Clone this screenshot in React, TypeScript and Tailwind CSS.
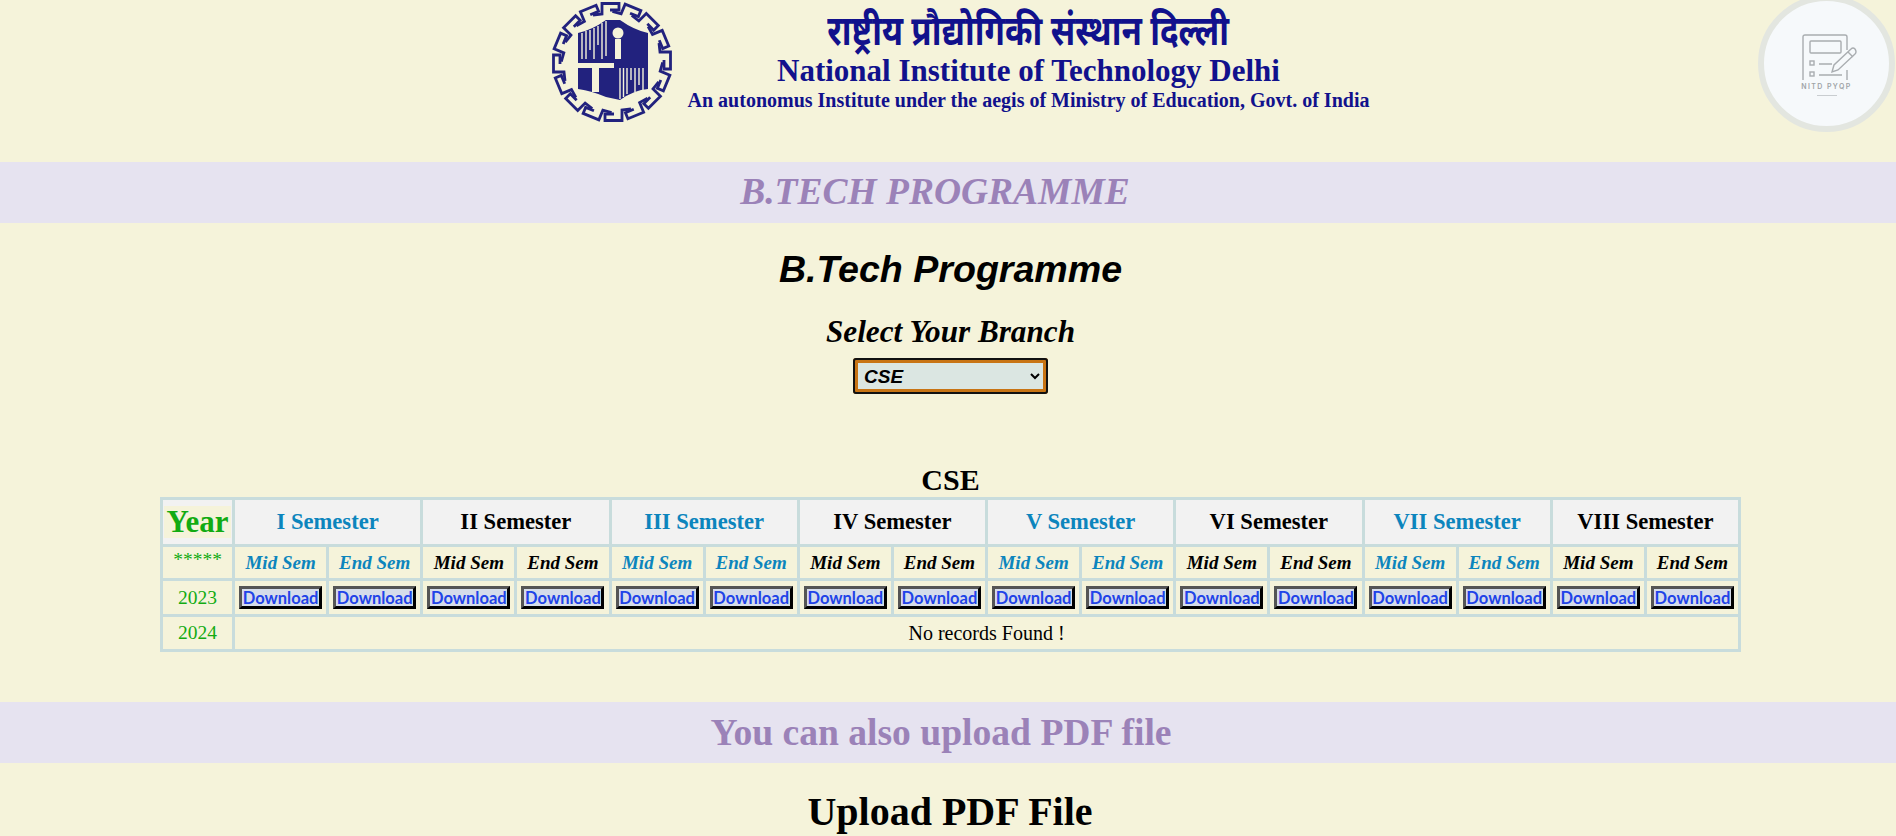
import React from 'react';

const semesters = ['I', 'II', 'III', 'IV', 'V', 'VI', 'VII', 'VIII'];

// Greek key ring + building mark of the institute
const InstituteLogo = () => {
  const keys = Array.from({ length: 16 }, (_, i) => i * 22.5);
  return (
    <svg width="128" height="124" viewBox="0 0 124 124" className="shrink-0 -ml-[2px]">
      {keys.map((deg) => (
        <path
          key={deg}
          transform={`rotate(${deg} 62 62)`}
          d="M43 15 L52 14 L52 3.5 L69 3.5 L69 10 L60 10"
          fill="none"
          stroke="#22227e"
          strokeWidth="2.8"
        />
      ))}
      <path d="M28 33 Q42 30 56 20 L70 20 Q84 30 98 33 L98 89 Q84 90 70 100 L56 97 Q42 91 28 89 Z" fill="#22227e" />
      <g stroke="#f5f3da" strokeWidth="1.4">
        <path d="M32 33 V59 M36 31 V59 M40 30 V50 M44 28 V59 M48 26 V45 M52 23 V59 M56 21 V56" />
        <path d="M70 68 V99 M73.5 68 V97 M77 68 V94 M81 68 V80 M85 68 V92 M89 68 V85 M93 68 V90" />
      </g>
      <circle cx="68" cy="33" r="5.5" fill="#f5f3da" />
      <rect x="65" y="39" width="6" height="20" fill="#f5f3da" />
      <rect x="28" y="63" width="36" height="5" fill="#f5f3da" />
      <rect x="42" y="68" width="7" height="24" fill="#f5f3da" />
    </svg>
  );
};

const PyqpBadge = () => (
  <div className="absolute right-px top-[-5px] flex h-[137px] w-[137px] flex-col items-center justify-center rounded-full border-[6px] border-[#e3e6e0] bg-[#f6f9fb]">
    <svg width="56" height="48" viewBox="0 0 56 46" fill="none" stroke="#a9adb0" strokeWidth="1.4" className="mt-[1px] ml-[4px]">
      <path d="M2 46 V3 Q2 1 4 1 H44 Q46 1 46 3 V16 M46 36 V46" />
      <rect x="9" y="7" width="31" height="12" rx="1" />
      <rect x="9" y="27" width="4" height="4" />
      <rect x="9" y="38" width="4" height="4" />
      <path d="M18 30 H31 M18 41 H41 M31 38 L33 31 L50 15 Q52 13 54 15 Q56 18 54 20 L37 36 Z M47 18 L52 23" />
    </svg>
    <span className="mt-[1px] font-['Inter',sans-serif] text-[7px] font-semibold leading-[9px] tracking-[1.4px] text-[#a0a4a7]">NITD PYQP</span>
    <span className="mt-[4px] h-px w-[20px] bg-[#c9cdd0]" />
  </div>
);

const DownloadButton = () => (
  <button className="mt-[2px] h-[23px] w-[83px] border-[3px] border-t-[#555] border-l-[#555] border-r-black border-b-black bg-[#d5dcea] font-['Lato','Open_Sans',sans-serif] text-[16.5px] leading-[16px] font-bold whitespace-nowrap text-[#2143e8]">
    Download
  </button>
);

export default function App() {
  return (
    <div className="relative h-[836px] overflow-hidden bg-[#f5f3da] font-['Liberation_Serif','Noto_Sans_Devanagari','Noto_Sans',serif]">
      <header className="flex h-[162px] items-start pl-[550px]">
        <InstituteLogo />
        <div className="ml-[12px] flex w-[681px] flex-col items-center font-bold text-[#11118c]">
          <div className="mt-[8px] scale-x-[0.81] text-[41px] leading-[46px] whitespace-nowrap">राष्ट्रीय प्रौद्योगिकी संस्थान दिल्ली</div>
          <div className="text-[31px] leading-[33px]">National Institute of Technology Delhi</div>
          <div className="mt-[2px] text-[20px] leading-[22px] whitespace-nowrap">An autonomus Institute under the aegis of Ministry of Education, Govt. of India</div>
        </div>
      </header>
      <PyqpBadge />

      <div className="flex h-[61px] items-center justify-center bg-[#e6e3f0] pr-[26px] text-[37.5px] font-bold italic text-[#9b82b8]">
        B.TECH PROGRAMME
      </div>

      <main className="flex flex-col items-center pl-[5px]">
        <h1 className="mt-[24px] font-['Liberation_Sans',sans-serif] text-[37.6px] leading-[44px] font-bold italic text-black">B.Tech Programme</h1>
        <h2 className="mt-[24px] text-[31.2px] leading-[34px] font-bold italic text-black">Select Your Branch</h2>
        <select className="mt-[9px] h-[36px] w-[195px] rounded-[3px] border-[5px] border-[#c87414] bg-[#dbe6e2] pl-[2px] font-['Liberation_Sans',sans-serif] text-[19px] font-bold italic text-black outline-2 -outline-offset-2 outline-[#111]" defaultValue="CSE">
          <option>CSE</option>
        </select>

        <h3 className="mt-[69px] text-[30px] leading-[34px] font-bold text-black">CSE</h3>
        <table className="w-[1581px] table-fixed border-collapse border-[3px] border-[#c8dcdc] text-center">
          <colgroup>
            <col className="w-[72px]" />
          </colgroup>
          <tbody>
            <tr className="h-[47px]">
              <th className="border-[3px] border-[#c8dcdc] bg-[#f2f2f2] px-[1px]">
                <span className="block bg-[#f5f3da] text-[31px] leading-[32px] font-bold text-[#12ab12]">Year</span>
              </th>
              {semesters.map((s, i) => (
                <th
                  key={s}
                  colSpan={2}
                  className={`border-[3px] border-[#c8dcdc] bg-[#f2f2f2] text-[22.6px] leading-[26px] font-bold ${i % 2 === 0 ? 'text-[#0c85bd]' : 'text-black'}`}
                >
                  {s} Semester
                </th>
              ))}
            </tr>
            <tr className="h-[34px]">
              <td className="border-[3px] border-[#c8dcdc] pb-[6px] text-[19.5px] leading-[20px] text-[#12ab12]">*****</td>
              {semesters.map((s, i) => (
                <React.Fragment key={s}>
                  <td className={`border-[3px] border-[#c8dcdc] text-[19px] leading-[22px] font-bold italic ${i % 2 === 0 ? 'text-[#0c85bd]' : 'text-black'}`}>Mid Sem</td>
                  <td className={`border-[3px] border-[#c8dcdc] text-[19px] leading-[22px] font-bold italic ${i % 2 === 0 ? 'text-[#0c85bd]' : 'text-black'}`}>End Sem</td>
                </React.Fragment>
              ))}
            </tr>
            <tr className="h-[36px]">
              <td className="border-[3px] border-[#c8dcdc] text-[19.5px] leading-[22px] text-[#12ab12]">2023</td>
              {semesters.map((s) => (
                <React.Fragment key={s}>
                  <td className="border-[3px] border-[#c8dcdc]"><DownloadButton /></td>
                  <td className="border-[3px] border-[#c8dcdc]"><DownloadButton /></td>
                </React.Fragment>
              ))}
            </tr>
            <tr className="h-[35px]">
              <td className="border-[3px] border-[#c8dcdc] text-[19.5px] leading-[22px] text-[#12ab12]">2024</td>
              <td colSpan={16} className="border-[3px] border-[#c8dcdc] text-[20px] leading-[22px] text-black">No records Found !</td>
            </tr>
          </tbody>
        </table>
      </main>

      <div className="mt-[50px] flex h-[61px] items-center justify-center bg-[#e6e3f0] pt-[2px] pr-[14px] text-[37.6px] font-bold text-[#9b82b8]">
        You can also upload PDF file
      </div>
      <h2 className="mt-[26px] pl-[4px] text-center text-[40px] leading-[46px] font-bold text-black">Upload PDF File</h2>
    </div>
  );
}
